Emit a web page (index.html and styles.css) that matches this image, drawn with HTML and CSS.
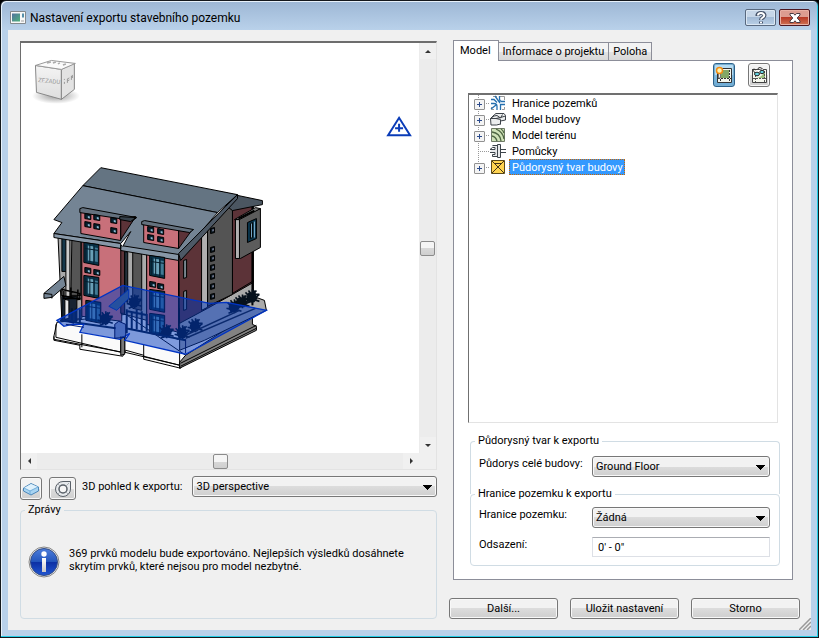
FILE: index.html
```html
<!DOCTYPE html>
<html lang="cs">
<head>
<meta charset="utf-8">
<title>Nastavení exportu stavebního pozemku</title>
<link rel="stylesheet" href="styles.css">
</head>
<body>
<div class="window">
  <header class="titlebar">
    <svg class="app-icon" width="16" height="14" viewBox="0 0 16 14" aria-hidden="true">
      <defs><linearGradient id="app" x2="1" y2="1"><stop stop-color="#5373a0"/><stop offset="1" stop-color="#4db17c"/></linearGradient></defs>
      <path d="M.5 .5h15v12H.5z" fill="#f8f8f8" stroke="#84898d"/><path d="M2 2.500h8v8H2z" fill="url(#app)"/><path d="M12 2.500h2v4h-2z" fill="#568faa"/><path d="M11 9h3v2h-3z" fill="#ccc"/>
    </svg>
    <h1>Nastavení exportu stavebního pozemku</h1>
    <button class="cap" aria-label="Help"><svg width="12" height="14" viewBox="0 0 12 14"><path d="M2.500 5V4Q3 2 6 2t3.500 2.200q0 1.300-1.500 2.300Q6 7.500 6 9M6 10.500v2" fill="none" stroke="#46536a" stroke-width="4"/><path d="M3 4.500V4Q3.500 2 6 2t3.300 2.200q0 1.300-1.500 2.300Q6 7.500 6 8.800M6 10.800v1.500" fill="none" stroke="#fff" stroke-width="2"/></svg></button>
    <button class="cap close" aria-label="Close"><svg width="14" height="12" viewBox="0 0 14 12"><path d="M2 1.500h3.500L7 3.200l1.500-1.700H12v1.500L9.200 6 12 9v1.500H8.500L7 8.800l-1.500 1.700H2V9l2.800-3L2 3z" fill="#fff" stroke="#4b3a42"/></svg></button>
  </header>

  <main class="client">
    <section class="left">
      <div class="viewport">
        <svg class="scene" viewBox="21 43 398 411" preserveAspectRatio="xMinYMin meet" role="img" aria-label="3D perspective">
          <defs>
            <linearGradient id="cf" x2="0" y2="1"><stop stop-color="#f4f4f4"/><stop offset="1" stop-color="#dedede"/></linearGradient>
            <radialGradient id="sh"><stop stop-color="#999"/><stop offset="1" stop-color="#fff"/></radialGradient>
            <g id="bush"><path d="M0 8V-6M-1 3l-6-6M-1 1l5-6M0 5l7-6M-1 5l-7-2M0 0l-4-5M0 2l2-7M1 4l6 2M-1 6l-5 2M-6-1h5M1-1h6" stroke="#06111c" stroke-width="1.600"/><path d="M-4-3h7l2 6-3 4h-6l-2-5z" fill="#06111c"/></g>
            <g id="sw"><path d="M0 0l6 1v5l-6-1z" fill="#07202f" stroke="#000"/><path d="M3 2.500l2 .5v2l-2-.5z" fill="#8fb9d0"/></g>
            <g id="win"><path d="M0 0l15 2v21L0 20z" fill="#09334a" stroke="#000"/><path d="M4 3l6 1v15l-6-1z" fill="#69a0b7"/><path d="M11 5l3 .5v14l-3-.5z" fill="#427a94"/><path d="M2 2v18M6 2v18M10 3v19M1 6l14 2" stroke="#051c2c" fill="none"/></g>
            <g id="gw"><path d="M0 1l4-1v5l-4 1z" fill="#0b1820" stroke="#000"/><path d="M2 2l1-.5v2l-1 .5z" fill="#bbd"/></g>
          </defs>

          <g class="cube">
            <ellipse cx="56" cy="96" rx="24" ry="8" fill="url(#sh)"/>
            <path d="M35.500 65.500l26 4v30l-25-7z" fill="url(#cf)" stroke="#888"/>
            <path d="M61.500 69.500l13-6v26l-13 10z" fill="#e3e3e3" stroke="#888"/>
            <path d="M35.500 65.500l16-5 24 3-14 6z" fill="#fafafa" stroke="#999"/>
            <path d="M47 63l4-1M53 63l3-1M58 64l2-1M63 65l3-1" stroke="#aaa" stroke-width="1.500"/>
            <path d="M64.500 84v-2M64.500 80v-1M67.500 83v-4l2-1M67.500 81l2-1M71.500 80v-4l1 2v-3" stroke="#999" fill="none"/>
            <text x="38" y="82" transform="rotate(6 38 82)">ZEZADU</text>
          </g>

          <path d="M389 135.500h22L400 118z" fill="none" stroke="#0a3cb8" stroke-width="2"/><path d="M400 124v8M396 128.500h8" stroke="#0a3cb8" stroke-width="2"/>

          <g stroke="#000" stroke-width="1" stroke-linejoin="round">
            <!-- plinth and terraces -->
            <path d="M54 337l3-14 69-8 60 41-5 13-37-9v-4l-18-5-3 6-43-7v-5l-26-5z" fill="#fafafa"/>
            <path d="M186 356l67-43v12l4 2v4l-77 38v-6z" fill="#828282"/>
            <path d="M181 364l76-38M181 367l76-38M180 353v16" fill="none"/>
            <path d="M56 325v13l65 15V337M82 335v13M125 338v15l55 13M144 345v13M54 337v4l26 5M80 345l43 8M144 357l36 9" fill="none"/>
            <path d="M121 338l4-1v18l-4 1z" fill="#777"/>
            <path d="M233 294l21-13v16l11 4 2 10-62 30-25 10v-42z" fill="#aaa"/>
            <!-- gable end -->
            <path d="M179 258l23-23 52-33v81l-21 12-25 14-28 15z" fill="#5c3338"/>
            <path d="M202 236l6-6v78l-6 3z" fill="#b0afb0"/>
            <path d="M208 230l25-26v91l-25 12z" fill="#545454"/>
            <path d="M233 209l20-4v77l-20 12z" fill="#5c3338"/>
            <path d="M253 207v99" stroke-width="2"/>
            <!-- facades -->
            <path d="M58 235l24 5v79l-20 3z" fill="#aaa"/><path d="M72 239l9 2v55H71z" fill="#555"/><path d="M62 237l5 1v34h-5z" fill="#16384b"/><path d="M66 238l4 1v60l-4-1z" fill="#ccc"/>
            <path d="M62 297h15v25H62z" fill="#172331"/><path d="M65 300l4 1v18l-4 1z" fill="#e8e8e8"/>
            <path d="M82 239l40 5v78l-40-5z" fill="#c8707a"/>
            <path d="M121 246l4 1v67h-4z" fill="#5c3338"/>
            <path d="M125 250l22 4v67l-22-6z" fill="#aaa"/><path d="M133 252l9 2v57l-9-2z" fill="#555"/><path d="M125 252l3 1v50l-3-1z" fill="#23313c"/>
            <path d="M147 254l32 6v73l-32-8z" fill="#c8707a"/>
            <path d="M179 258v74" fill="none"/>
            <!-- roofs -->
            <path d="M220 192l43 9v4l-30 6-10-8z" fill="#4b5661"/>
            <path d="M101 168l137 27-20 18-135-27z" fill="#647482"/>
            <path d="M83 186l135 27-39 45-59-9 1-5-67-10 8-11-8-3z" fill="#748494"/>
            <path d="M54 234l67 10v5l-67-11zM121 246l58 9v6l-58-10z" fill="#8797a7"/>
            <path d="M179 254l59-59v4l-57 62z" fill="#4d5966"/>
            <path d="M121 244l10-12-8 15" fill="#fff"/>
            <!-- dormers -->
            <path d="M81 211l40 7v23l-40-7z" fill="#c8707a"/><path d="M121 218l15-1-15 23z" fill="#5c3338"/>
            <path d="M80 209l3-1 54 10-4 3-53-8z" fill="#64717e"/><path d="M120 217l16 1-5 4-11-2z" fill="#37424c"/>
            <path d="M144 224l35 5v20l-35-6z" fill="#c8707a"/><path d="M179 230l13 1-13 18z" fill="#5c3338"/>
            <path d="M142 222l3-1 49 9-4 3-48-8z" fill="#64717e"/>
            <!-- bay -->
            <path d="M236 220l25-11v39l-20 11h-5z" fill="#5c5c5c"/><path d="M236 220h4v39h-4z" fill="#b0afb0"/><path d="M235 220l21-12 5 1-21 11z" fill="#7b7b7b"/>
            <path d="M248 223l9-4v20l-9 4z" fill="#09334a"/><path d="M251 224l2-1v15l-2 1z" fill="#7dafd0"/><path d="M255 222v16" stroke="#7dafd0"/>
            <path d="M239 219l4-2M243 217l4-2M247 215l4-2M251 213l4-2" stroke-width="2"/>
            <!-- canopy -->
            <path d="M44 294l20-17 2 9-14 12-8 1zM44 294l8 1v4" fill="#748494"/>
          </g>
          <use href="#sw" x="85" y="214"/><use href="#sw" x="94" y="215"/><use href="#sw" x="111" y="218"/><use href="#sw" x="85" y="222"/><use href="#sw" x="94" y="224"/><use href="#sw" x="111" y="228"/>
          <use href="#sw" x="148" y="227"/><use href="#sw" x="158" y="229"/><use href="#sw" x="148" y="235"/><use href="#sw" x="158" y="237"/>
          <use href="#win" x="84" y="243"/><use href="#sw" x="85" y="268"/><use href="#sw" x="94" y="270"/><use href="#win" x="84" y="276"/><use href="#win" x="86" y="301"/>
          <use href="#win" x="150" y="256"/><use href="#sw" x="150" y="282"/><use href="#sw" x="158" y="284"/><use href="#win" x="150" y="290"/><use href="#win" x="150" y="314"/>
          <use href="#gw" x="211" y="228"/><use href="#gw" x="211" y="247"/><use href="#gw" x="211" y="256"/><use href="#gw" x="211" y="265"/><use href="#gw" x="211" y="274"/><use href="#gw" x="211" y="284"/><use href="#gw" x="211" y="294"/>
          <path d="M184 261l3-1v18l-3 1zM184 292l3-1v19l-3 1z" fill="#78868f" stroke="#000"/>
          <path d="M62 290l18 4v6l-18-4zM63 299h18M64 289v10M71 288v12M78 290v11" fill="none" stroke="#000" stroke-width="1.500"/>
          <use href="#bush" x="106" y="318"/><use href="#bush" x="135" y="301"/><use href="#bush" x="167" y="331"/><use href="#bush" x="183" y="332"/><use href="#bush" x="196" y="325"/><use href="#bush" x="235" y="306"/><use href="#bush" x="243" y="301"/><use href="#bush" x="253" y="296"/>
          <path d="M72 309v12M76 309v13M80 310v13M127 310v24M132 312v18M137 310v20M142 312v20M147 315v17M128 312l20 4M60 321l56 8M126 329l60 12" stroke="#071830" stroke-width="2"/>
          <path d="M186 339l70-30M186 336l54-25" stroke="#171d22" fill="none" stroke-width="1.500"/>
          <!-- footprint -->
          <path d="M57 321l66-35 87 18 17-1 40 8-81 44-61-14 5-7-10 6-40-7 4-8h-12l-8 2z" fill="#0038bc" fill-opacity=".5" stroke="#0034c4" stroke-width="1.300"/>
          <path d="M115 325l4-3 7 3v13l-11 1zM186 340v14M66 325l18 3M68 322l6 2" fill="#163fa5" fill-opacity=".5" stroke="#001c70"/>
          <path d="M109 307l20-17v9l-12 12z" fill="#25509f" stroke="#0034b4"/>
        </svg>
        <div class="vbar"><button aria-label="Up"><i class="arr up"></i></button><span class="thumb"></span><button aria-label="Down"><i class="arr down"></i></button></div>
        <div class="hbar"><button aria-label="Left"><i class="arr west"></i></button><span class="thumb"></span><button aria-label="Right"><i class="arr east"></i></button></div>
      </div>

      <div class="toolbar">
        <button class="tool" aria-label="3D box"><svg width="16" height="14" viewBox="0 0 16 14"><path d="M.5 6L8 1.500 15.500 5v4L8 13 .5 9z" fill="#a8d4f2" stroke="#4b86b8"/><path d="M1 6l7-4 7 3-8 4z" fill="#dff1fc"/><path d="M1 6l6 3 8-4M7 9v3" fill="none" stroke="#72aeda"/></svg></button>
        <button class="tool wide" aria-label="Orbit"><svg width="18" height="18" viewBox="0 0 18 18" fill="none" stroke="#596068"><path d="M9 1.500h7.500V9A7.500 7.500 0 1 1 9 1.500z" fill="#e6e9ec"/><circle cx="9" cy="9" r="4" fill="#f6f6f6" stroke-width="1.500"/><path d="M12 6l3-3M6 12l-2 2M12 12l2 2M6 6L4 4" stroke="#a8adb2"/></svg></button>
        <label for="view">3D pohled k exportu:</label>
        <select id="view"><option>3D perspective</option></select>
      </div>

      <fieldset class="messages">
        <legend>Zprávy</legend>
        <div class="message">
          <svg width="32" height="34" viewBox="0 0 32 34" aria-hidden="true">
            <defs><linearGradient id="inf" x2="0" y2="1"><stop stop-color="#4d7edc"/><stop offset=".48" stop-color="#2456bd"/><stop offset=".52" stop-color="#0c30a5"/><stop offset="1" stop-color="#2257d2"/></linearGradient><linearGradient id="stem" x2="0" y2="1"><stop stop-color="#fff"/><stop offset="1" stop-color="#c9c9c9"/></linearGradient></defs>
            <circle cx="16" cy="17" r="15" fill="#eee" stroke="#868686"/><circle cx="16" cy="17" r="13.500" fill="url(#inf)" stroke="#334d86"/><circle cx="16" cy="9" r="2.700" fill="#fff"/><path d="M14 13h4v14h-4z" fill="url(#stem)"/>
          </svg>
          <p>369 prvků modelu bude exportováno. Nejlepších výsledků dosáhnete skrytím prvků, které nejsou pro model nezbytné.</p>
        </div>
      </fieldset>
    </section>

    <section class="right">
      <div class="tabs" role="tablist">
        <button role="tab" aria-selected="true" class="tab active">Model</button>
        <button role="tab" class="tab">Informace o projektu</button>
        <button role="tab" class="tab">Poloha</button>
      </div>
      <div class="panel">
        <div class="modes">
          <button class="mode on" aria-label="Show"><svg width="18" height="18" viewBox="0 0 18 18"><path d="M2.500 2.500h14v14h-14z" fill="#f5f7ee" stroke="#333"/><path d="M6 4h8v8H6z" fill="#83a866"/><path d="M3 12.500h13M5.500 4v12M14.500 4v12" stroke="#333" stroke-dasharray="2 1"/><path d="M3.500 7h2v5h-2z" fill="#eee" stroke="#777"/><circle cx="4.500" cy="4.500" r="3" fill="#fff4b0" stroke="#f28c11" stroke-width="1.500"/></svg></button>
          <button class="mode" aria-label="Preview"><svg width="18" height="18" viewBox="0 0 18 18"><path d="M2.500 3.500h14v13h-14z" fill="#f5f7ee" stroke="#444"/><path d="M7 12q5-1 8-7v7z" fill="#9dc17e"/><path d="M3 12.500h13M5.500 9v7M14.500 5v11" stroke="#555" stroke-dasharray="2 1"/><path d="M2.500 3.500L5 7M2.500 3.500q2-1 3 .5M8 3q0-1.500 2-1.500Q13 2 13.500 5" fill="none" stroke="#333"/><path d="M5 5l8-2 .5 2L7 7z" fill="#fff"/><ellipse cx="7" cy="8" rx="2.500" ry="1.800" fill="#66d4e2" stroke="#222"/><ellipse cx="12" cy="6" rx="2.200" ry="1.700" fill="#66d4e2" stroke="#222"/></svg></button>
        </div>

        <ul class="tree" role="tree">
          <li role="treeitem"><i class="node plus"></i><svg width="16" height="16" viewBox="0 0 16 16" fill="none"><path d="M3 1.500H7M10 1.500h4.500V5M14.500 12v2.500H12M4 14.500H1.500V12" stroke="#999"/><path d="M9.500 1v3q0 2 2 2.500H15M15 9.500h-4.500V15M1 4.500h3l3 3M1 8.500h3q3 0 3 3V15M5 1l5 7M1 14l5-4" stroke="#256fae" stroke-width="1.300"/></svg><span>Hranice pozemků</span></li>
          <li role="treeitem"><i class="node plus"></i><svg width="16" height="16" viewBox="0 0 16 16" stroke="#3c4248"><path d="M.5 7.500l4-4 1.500-1h8l1.500 2v4.500l-5 1v3l-4 1h-5.500z" fill="#eceeef"/><path d="M.5 7.500h5.500l4.500-1 5-1.500M6 7.500l4.500 1v5M.5 7.500L4 5l3-.5 3.500 2.500 2-3.500" fill="none"/></svg><span>Model budovy</span></li>
          <li role="treeitem"><i class="node plus"></i><svg width="16" height="16" viewBox="0 0 16 16" fill="none"><path d="M1.500 1.500h13v13h-13z" fill="#cfe2b8" stroke="#6e7a66"/><path d="M2 5q8 1 9 9M2 9q4 1 5 5M6 2q7 3 8 10M11 2q2 1 3 4" stroke="#4e6543" stroke-width="1.300"/></svg><span>Model terénu</span></li>
          <li role="treeitem"><i class="node"></i><svg width="16" height="16" viewBox="0 0 16 16" fill="#e8eaec" stroke="#3d444b"><path d="M10 6.500h6M10 9.500h6"/><path d="M2.500 2.500h5v11h-5v-2h2.500v-2H0M0 6.500h5v-2H2.500z"/><path d="M7.500 1.500h3v13h-3z"/></svg><span>Pomůcky</span></li>
          <li role="treeitem" aria-selected="true"><i class="node plus last"></i><svg width="16" height="16" viewBox="0 0 16 16"><path d="M1.500 1.500h13v13h-13z" fill="#ffd451" stroke="#5b4918"/><path d="M2 2l12 12M14 2L2 14M5 4.500h6" stroke="#45351a"/></svg><span class="selected">Půdorysný tvar budovy</span></li>
        </ul>

        <fieldset class="group first">
          <legend>Půdorysný tvar k exportu</legend>
          <div class="fields"><label for="floor">Půdorys celé budovy:</label><select id="floor"><option>Ground Floor</option></select></div>
        </fieldset>
        <fieldset class="group">
          <legend>Hranice pozemku k exportu</legend>
          <div class="fields">
            <label for="bound">Hranice pozemku:</label><select id="bound"><option>Žádná</option></select>
            <label for="offset">Odsazení:</label><input id="offset" type="text" value="0' - 0&quot;">
          </div>
        </fieldset>
      </div>
      <div class="actions"><button>Další...</button><button>Uložit nastavení</button><button>Storno</button></div>
    </section>
    <svg class="grip" width="12" height="12" viewBox="0 0 12 12" aria-hidden="true"><path d="M0 12L12 0M4 12l8-8M8 12l4-4" stroke="#999" stroke-width="1.500"/></svg>
  </main>
</div>
</body>
</html>
```
FILE: styles.css
```css
* { box-sizing: border-box; }
body {
  margin: 0;
  background: #000;
  color: #000;
  font: 11px/13px Roboto, Tahoma, sans-serif;
}
button, select, input { font: inherit; color: inherit; margin: 0; }
button { display: flex; align-items: center; justify-content: center; padding: 0; }

.window {
  min-height: 100vh;
  display: flex;
  flex-direction: column;
  padding: 0 6px 6px 7px;
  border: 1px solid #14181d;
  border-radius: 6px 6px 0 0;
  box-shadow: inset -1px -1px #22cde6, inset 1px 1px #e8f2fb;
  background: linear-gradient(#9db7d5, #b9d1ea 29px, #b9d1ea);
}
.titlebar { height: 29px; display: flex; align-items: center; padding: 4px 2px 0 2px; }
.titlebar h1 { flex: 1; margin: 0 0 0 4px; font-size: 12px; line-height: 16px; font-weight: 400; }
.cap {
  width: 31px;
  height: 17px;
  margin-left: 3px;
  border: 1px solid #59697f;
  border-radius: 2px;
  background: linear-gradient(#c6d6e8 50%, #a3bbd6 50%, #b9cfe6);
  box-shadow: inset 0 0 0 1px #dbe7f3;
}
.cap svg { flex: none; }
.cap.close { border-color: #4c1721; background: linear-gradient(#dc9c90 50%, #b83a26 50%, #cf7254); box-shadow: inset 0 0 0 1px #e8b0a4; }

.client {
  position: relative;
  flex: 1;
  display: grid;
  grid-template-columns: minmax(0, 417fr) minmax(0, 351fr);
  gap: 12px;
  padding: 10px 11px 11px 12px;
  margin: 0 1px 1px 0;
  background: #f0f0f0;
}
.left, .right { display: flex; flex-direction: column; min-width: 0; }

.viewport {
  flex: 1;
  display: grid;
  grid-template: minmax(0, 1fr) 16px / minmax(0, 1fr) 17px;
  min-height: 300px;
  margin-top: 1px;
  border: 1px solid #e3e3e3;
  border-top: 2px solid #6d6d6d;
  border-left: 1px solid #6d6d6d;
  background: #f0f0f0;
}
.scene { width: 100%; height: 100%; contain: size; background: #fff; }
.cube text { font-size: 6px; fill: #999; }
.vbar, .hbar { display: flex; align-items: center; justify-content: space-between; background: #ececec; }
.vbar { flex-direction: column; }
.vbar button, .hbar button { width: 16px; height: 16px; border: 0; background: #f0f0f0; }
.thumb { width: 15px; height: 15px; border: 1px solid #8b8b8b; border-radius: 2px; background: linear-gradient(#f5f5f5 50%, #d8d8d8 50%, #cfcfcf); }
.arr { border: 3px solid transparent; }
.arr.up { border-top: 0; border-bottom-color: #333; }
.arr.down { border-bottom: 0; border-top-color: #333; }
.arr.west { border-left: 0; border-right-color: #333; }
.arr.east { border-right: 0; border-left-color: #333; }

.toolbar { display: flex; align-items: flex-start; padding: 6px 0 3px; }
.toolbar label { margin: 4px 10px 0 6px; white-space: nowrap; }
.toolbar select { flex: 1; }
.tool, .mode, .actions button, select {
  border: 1px solid #777;
  border-radius: 3px;
  background: linear-gradient(#f2f2f2 50%, #dcdcdc 50%, #cfcfcf);
  box-shadow: inset 0 0 0 1px #f8f8f8;
}
.tool { width: 22px; height: 23px; margin: 1px 7px 0 0; }
.tool.wide { width: 27px; margin-right: 0; }
select {
  appearance: none;
  height: 21px;
  min-width: 0;
  padding: 0 16px 0 3px;
  background:
    conic-gradient(from -45deg at 50% 100%, #000 90deg, transparent 0) right 4px top 8px / 9px 5px no-repeat,
    linear-gradient(#f2f2f2 50%, #dcdcdc 50%, #cfcfcf);
}

fieldset { min-width: 0; margin: 0; padding: 0; border: 1px solid #d0dce4; border-radius: 4px; }
legend { height: 14px; line-height: 14px; margin-left: 4px; padding: 0 3px; }
.messages { height: 116px; }
.message { display: flex; align-items: center; gap: 9px; padding: 28px 8px 0 7px; }
.message p { flex: 1; margin: 0 0 4px; }

.tabs { display: flex; align-items: flex-end; height: 21px; margin: 0 0 -1px 4px; }
.tab { height: 19px; padding: 0 4px; border: 1px solid #8c8e99; border-left-width: 0; background: linear-gradient(#f3f3f3 50%, #e4e4e4 50%, #d8d8d8); white-space: nowrap; }
.tab.active { height: 21px; padding: 0 7px 2px 6px; border-left-width: 1px; border-bottom: 0; background: #fff; z-index: 1; }
.panel { flex: 1; display: flex; flex-direction: column; margin: 0 7px 0 4px; padding: 2px 14px 13px; border: 1px solid #8c8e99; background: #fff; }
.modes { display: flex; justify-content: flex-end; gap: 13px; padding: 0 8px 6px; }
.mode { width: 22px; height: 24px; }
.mode.on { border-color: #2c628b; background: linear-gradient(#b5dcf3 50%, #84bfe6 50%, #6caad4); box-shadow: inset 0 0 0 1px #78aed0; }

.tree { flex: 1; margin: 0; padding: 0 0 0 5px; list-style: none; border: 1px solid #e3e3e3; border-top: 2px solid #707070; border-left: 1px solid #707070; }
.tree li { display: flex; align-items: center; height: 16px; }
.tree span { margin-left: 3px; padding: 0 2px 0 3px; height: 16px; line-height: 17px; }
.tree .selected { outline: 1px dotted #cc6600; outline-offset: -1px; background: #3399ff; color: #fff; }
.node { width: 16px; height: 16px; background: repeating-linear-gradient(90deg, #999 0 1px, transparent 1px 2px) 4px 8px / 12px 1px no-repeat, repeating-linear-gradient(#999 0 1px, transparent 1px 2px) 4px 0 / 1px 16px no-repeat; }
.node.last { background-size: 12px 1px, 1px 8px; }
.node.plus::before {
  content: "";
  display: block;
  width: 9px;
  height: 9px;
  margin-top: 4px;
  border: 1px solid #919191;
  border-radius: 1px;
  background: linear-gradient(#2b4a8c, #2b4a8c) center / 5px 1px no-repeat, linear-gradient(#2b4a8c, #2b4a8c) center / 1px 5px no-repeat, #f4f4f4;
}

.group { margin: 0 -2px 0 2px; padding: 6px 9px 8px 8px; }
.group.first { margin-top: 11px; margin-bottom: -7px; padding: 8px 9px 17px 8px; border-bottom: 0; border-radius: 4px 4px 0 0; }
.group legend { margin-left: -4px; }
.fields { display: grid; grid-template-columns: 113px minmax(0, 1fr); row-gap: 9px; }
.fields label { padding-top: 1px; white-space: nowrap; }
.fields input { height: 20px; min-width: 0; padding: 0 5px; border: 1px solid #dde0e6; border-top-color: #abadb3; background: #fff; }
.actions { display: grid; grid-template-columns: repeat(3, 1fr); gap: 12px; margin-top: 18px; }
.actions button { height: 21px; }
.grip { position: absolute; right: 0; bottom: 0; }
```
